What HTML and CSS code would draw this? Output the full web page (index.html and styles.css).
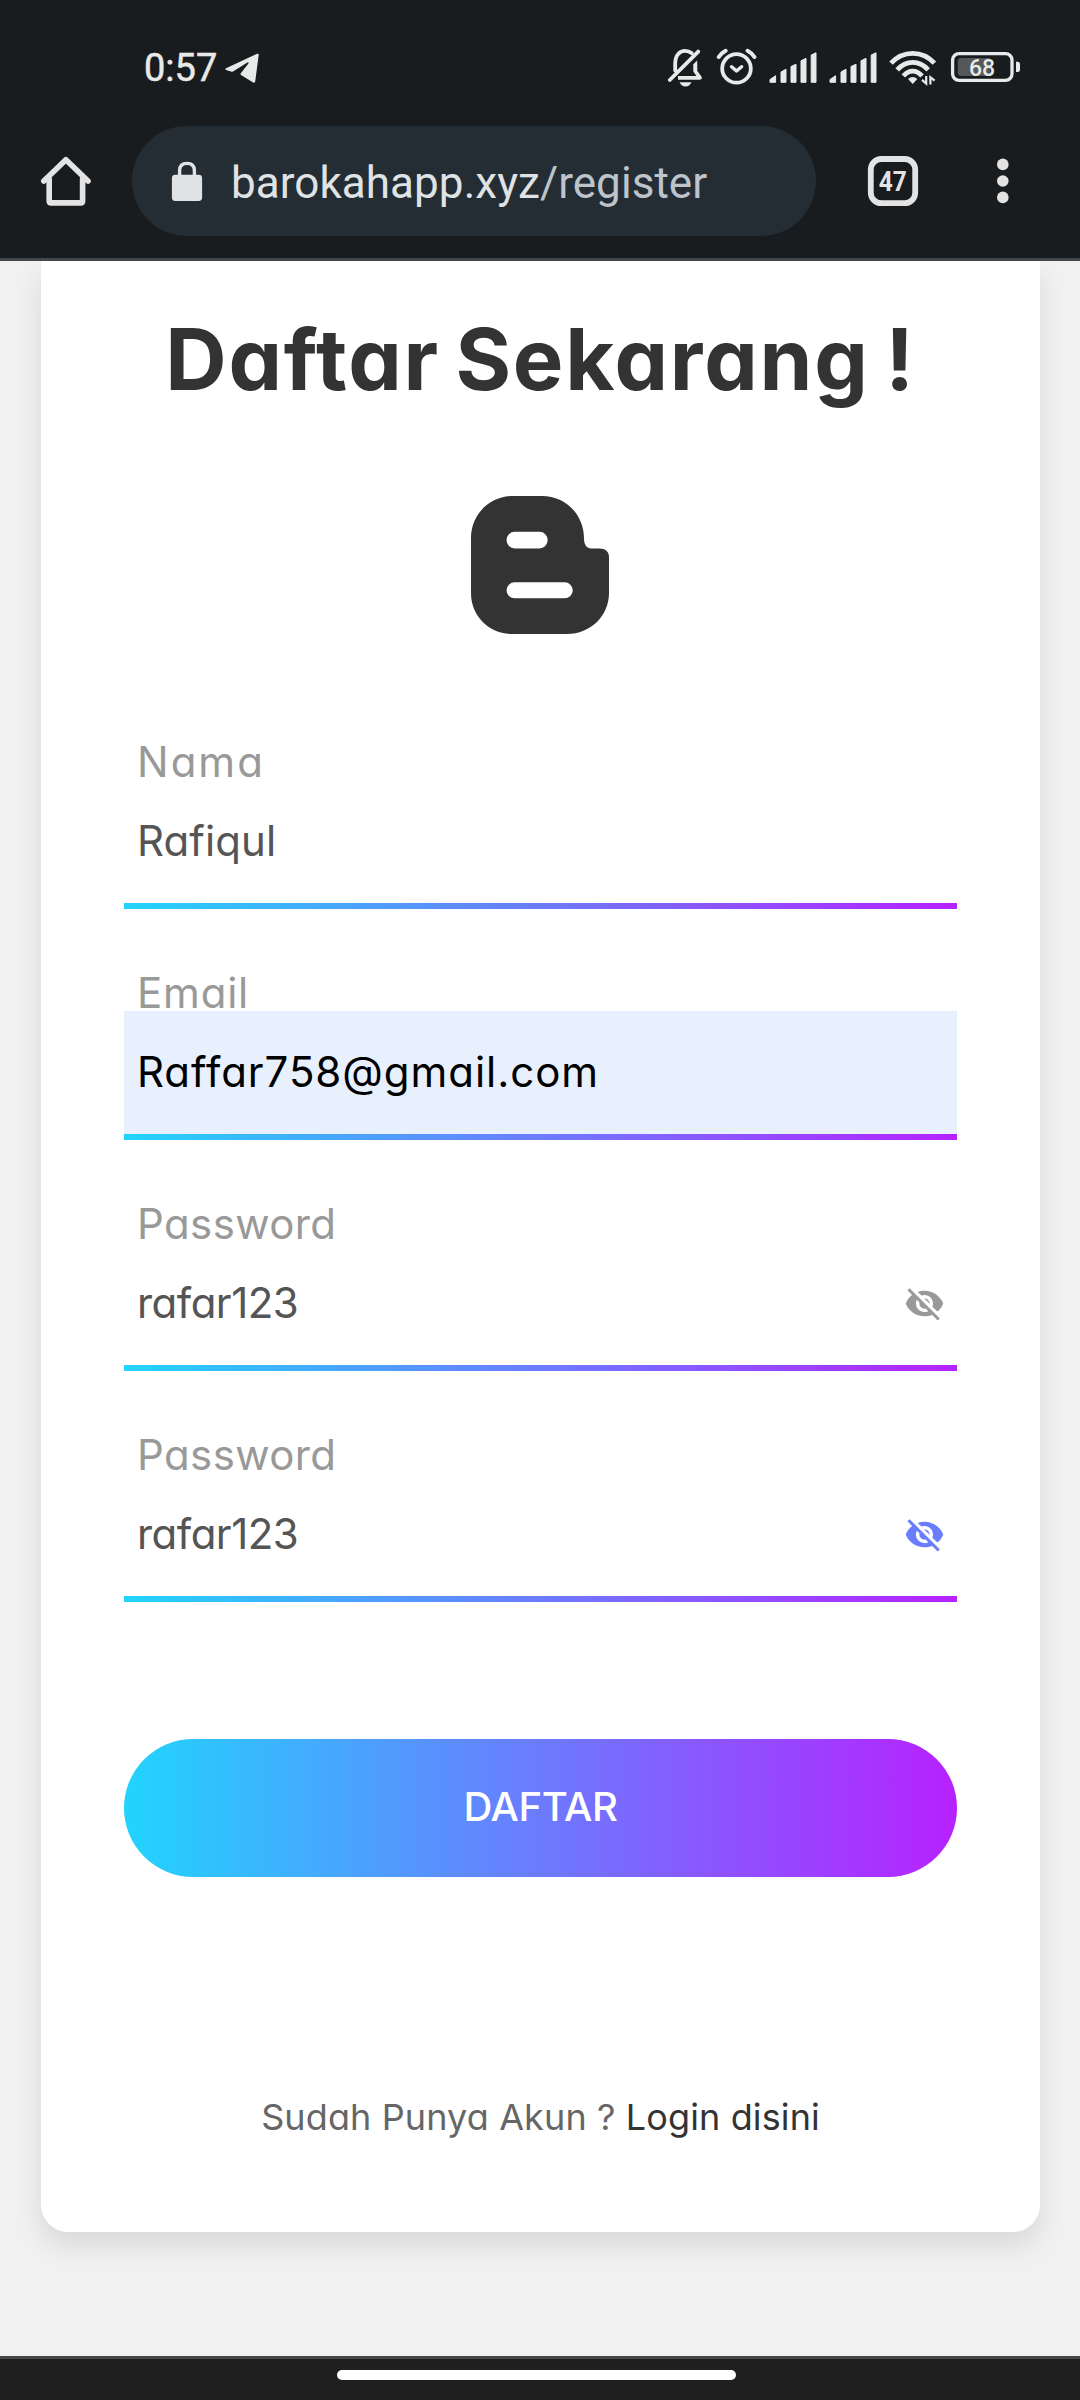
FILE: index.html
```html
<!DOCTYPE html>
<html lang="id">
<head>
<meta charset="utf-8">
<title>Daftar Sekarang</title>
<link rel="stylesheet" href="styles.css">
</head>
<body>
<div class="screen">
  <header class="chrome">
    <div class="status">
      <span class="clock">0:57</span>
      <svg class="telegram" viewBox="225 48 34 40" width="34" height="40"><path d="M257 53.8Q258.8 53.2 258.7 55L255.2 81.5Q254.8 83.2 253.2 82.4L241 75Q240 74.3 240.8 73.2L248.6 63.2Q248.8 61.8 247.4 62.5L233 71.6Q232 72 231 71.6L226 70Q224.7 69.2 226 68.2Z" fill="#e8eae9"/></svg>
      <div class="status-icons">
        <svg viewBox="668 48 36 40" width="36" height="40" fill="none" stroke="#e8eae9" stroke-width="3.8" stroke-linecap="round" stroke-linejoin="round">
          <path d="M675.2 70.5V63.5C675.2 55 680 50.9 685 50.9C687.8 50.9 689.8 51.6 691.5 53M669.8 80L698.2 51.6"/>
          <path d="M695.2 64V71L700 77.8H678" stroke-linecap="butt"/>
          <path d="M694 63.5L697.2 60.5V70L694 71Z" fill="#e8eae9" stroke="none"/>
          <path d="M679.5 82.3H691.5Q689.5 86.5 685.5 86.5T679.5 82.3Z" fill="#e8eae9" stroke="none"/>
        </svg>
        <svg viewBox="716 48 41 40" width="41" height="40" fill="none" stroke="#e8eae9" stroke-width="3.8" stroke-linecap="round" stroke-linejoin="round">
          <circle cx="736.5" cy="68.4" r="14.3"/>
          <path d="M731.6 66.7L736.5 71L741.6 66.7" stroke-width="3.4"/>
          <path d="M718.8 57Q721 53.3 725.6 50.8M754.4 57Q752.2 53.3 747.6 50.8" stroke-width="4"/>
        </svg>
        <svg class="signal" viewBox="769 48 48 40" width="48" height="40" fill="#e8eae9" stroke="#e8eae9" stroke-width="1" stroke-linejoin="round">
          <path id="bars" d="M770 82.3V79.5L775.6 75.7V82.3ZM781 82.3V72L786 69.2V82.3ZM791 82.3V66.5L796 64.2V82.3ZM801 82.3V60.8L806 58.3V82.3ZM811.2 82.3V55L816 52.8V82.3Z"/>
        </svg>
        <svg class="signal" viewBox="769 48 48 40" width="48" height="40" fill="#e8eae9" stroke="#e8eae9" stroke-width="1" stroke-linejoin="round">
          <use href="#bars"/>
        </svg>
        <svg viewBox="889 48 48 40" width="48" height="40" fill="none" stroke="#e8eae9" stroke-width="4.8">
          <path d="M891 63.2Q900 53.3 912.7 53.3T934.4 63.2M897.2 69.8Q904 62.4 912.7 62.4T928.2 69.8M903.4 76Q907.5 71.2 912.7 71.2T922 76"/>
          <path d="M908 79Q912.7 74.8 917.4 79L912.7 84Z" fill="#e8eae9" stroke="none"/>
          <path d="M926.2 76V83.5L922 79.8M930.4 84.5V77.2L934.6 80.6" stroke-width="2.2"/>
        </svg>
        <svg viewBox="949 48 72 40" width="72" height="40">
          <rect x="952.6" y="53.6" width="59.4" height="26.8" rx="6.5" fill="none" stroke="#e8eae9" stroke-width="3.3"/>
          <path d="M961 58H990V76H961Q957.7 76 957.7 72.7V61.3Q957.7 58 961 58Z" fill="#555759"/>
          <path d="M1016 61.7H1017.5Q1020 61.7 1020 64V69.5Q1020 72 1017.5 72H1016Z" fill="#e8eae9"/>
          <text class="battery-level" x="982" y="75.8" text-anchor="middle">68</text>
        </svg>
      </div>
    </div>
    <div class="toolbar">
      <svg class="home" viewBox="40 155 52 52" width="52" height="52" fill="none" stroke="#e3e3e4" stroke-width="5.6" stroke-linecap="round" stroke-linejoin="round"><path d="M49.2 179V201Q49.2 202.9 51.1 202.9H80.7Q82.6 202.9 82.6 201V179"/><path d="M43.800 181L65.900 159.700L88 181"/></svg>
      <div class="omnibox">
        <svg class="lock" viewBox="171 160 32 41" width="32" height="41"><rect x="171.9" y="173.7" width="30.2" height="26.2" rx="3.4" fill="#e0e3e6"/><path d="M179.6 175V169.6Q179.6 162.4 187 162.4T194.4 169.6V175" fill="none" stroke="#e0e3e6" stroke-width="3.4"/></svg>
        <span class="url">barokahapp.xyz<span class="path">/register</span></span>
      </div>
      <svg class="tabs" viewBox="867 155 52 52" width="52" height="52"><rect x="870.8" y="159" width="44.4" height="44.2" rx="10.5" fill="none" stroke="#e3e3e4" stroke-width="5.8"/><text class="tab-count" x="892.8" y="191.2" text-anchor="middle" textLength="28" lengthAdjust="spacingAndGlyphs">47</text></svg>
      <svg class="more" viewBox="996 155 14 52" width="14" height="52" fill="#e3e3e4"><circle cx="1002.8" cy="164.4" r="5.8"/><circle cx="1002.8" cy="181" r="5.8"/><circle cx="1002.8" cy="197.4" r="5.8"/></svg>
    </div>
  </header>

  <main class="page">
    <form class="card">
      <h1 class="title">Daftar Sekarang !</h1>
      <svg class="logo" viewBox="0 0 138 138" width="138" height="138"><path fill="#333" fill-rule="evenodd" d="M42 0H71C95 0 113 19 113 42.500C113 48.500 115.500 52.500 120.500 52.500H128.500C134.500 52.500 138 55.500 138 61V97C138 120 119.500 138 96 138H41C18 138 0 120 0 97V42C0 18.500 18.500 0 42 0ZM43.700 35.800A8.200 8.300 0 0 0 43.700 52.400H68.500A8.200 8.300 0 0 0 68.500 35.800ZM43.700 86.300A8.200 8 0 0 0 43.700 102.300H93.600A8.200 8 0 0 0 93.600 86.300Z"/></svg>

      <div class="fields">
        <div class="field">
          <label class="label name-label">Nama</label>
          <input class="input name" type="text" value="Rafiqul">
        </div>
        <div class="field">
          <label class="label email-label">Email</label>
          <input class="input email" type="text" value="Raffar758@gmail.com">
        </div>
        <div class="field">
          <label class="label">Password</label>
          <div class="reveal">
            <input class="input password" type="text" value="rafar123">
            <svg class="eye" viewBox="0 0 24 24"><path id="eye-off" d="M12 7c2.760 0 5 2.240 5 5 0 .65-.13 1.260-.36 1.830l2.920 2.920c1.510-1.260 2.700-2.890 3.430-4.750-1.730-4.390-6-7.500-11-7.500-1.400 0-2.740.25-3.980.7l2.160 2.160C10.740 7.130 11.350 7 12 7zM2 4.270l2.280 2.280.46.46C3.080 8.300 1.780 10.020 1 12c1.730 4.390 6 7.500 11 7.500 1.550 0 3.030-.3 4.380-.84l.42.42L19.730 22 21 20.730 3.270 3 2 4.270zM7.530 9.800l1.550 1.550c-.05.21-.08.43-.08.65 0 1.660 1.340 3 3 3 .22 0 .44-.03.65-.08l1.550 1.550c-.67.33-1.410.53-2.200.53-2.760 0-5-2.240-5-5 0-.79.2-1.530.53-2.200zm4.310-.78l3.150 3.150.02-.16c0-1.660-1.340-3-3-3l-.17.01z"/></svg>
          </div>
        </div>
        <div class="field">
          <label class="label">Password</label>
          <div class="reveal">
            <input class="input password" type="text" value="rafar123">
            <svg class="eye active" viewBox="0 0 24 24"><use href="#eye-off"/></svg>
          </div>
        </div>
      </div>

      <button class="submit" type="button">DAFTAR</button>
      <p class="login">Sudah Punya Akun ? <a class="login-link">Login disini</a></p>
    </form>
  </main>

  <footer class="navbar"><div class="handle"></div></footer>
</div>
</body>
</html>
```
FILE: styles.css
```css
* { box-sizing: border-box; }
body { margin: 0; }
svg { display: block; flex: none; }

.screen {
  width: 1080px;
  height: 2400px;
  display: flex;
  flex-direction: column;
  overflow: hidden;
}

/* Browser chrome */
.chrome {
  height: 261px;
  flex: none;
  background: #191c1e;
  border-bottom: 3px solid #41474c;
  font-family: Roboto, sans-serif;
}
.status {
  height: 126px;
  padding: 10px 59px 0 144px;
  display: flex;
  align-items: center;
}
.clock {
  width: 81px;
  font-size: 38px;
  font-weight: 400;
  -webkit-text-stroke: .5px #e8eae9;
  line-height: 40px;
  color: #e8eae9;
}
.status-icons {
  margin-left: auto;
  display: flex;
  gap: 12px;
}
.battery-level {
  font: 500 23px Roboto, sans-serif;
  fill: #e8eae9;
}
.toolbar {
  height: 110px;
  padding: 0 70px 0 40px;
  display: flex;
  align-items: center;
}
.omnibox {
  width: 684px;
  height: 110px;
  margin-left: 40px;
  padding-left: 39px;
  display: flex;
  align-items: center;
  border-radius: 55px;
  background: #232d33;
}
.url {
  margin-left: 28px;
  padding-top: 4px;
  font-size: 44px;
  line-height: 52px;
  letter-spacing: .06px;
  color: #e0e3e6;
}
.path { color: #bdc4cc; }
.tabs { margin-left: 51px; }
.tab-count {
  font: 700 28.5px Roboto, sans-serif;
  fill: #e3e3e4;
}
.more { margin-left: auto; }

/* Registration page */
.page {
  height: 2095px;
  flex: none;
  padding: 0 40px 0 41px;
  overflow: hidden;
  background: #f1f1f1;
  font-family: Inter, sans-serif;
  font-feature-settings: "cv11";
}
.card {
  height: 1971px;
  padding: 54px 83px 0;
  display: flex;
  flex-direction: column;
  background: #fff;
  border-radius: 0 0 27px 27px;
  box-shadow: 0 14px 27px rgba(0, 0, 0, .1);
}
.title {
  margin: 0;
  text-align: center;
  font-size: 85px;
  font-weight: 700;
  line-height: 90px;
  letter-spacing: 1.800px;
  word-spacing: -6.500px;
  white-space: nowrap;
  color: #333;
}
.logo { margin: 91px 348px 107px 347px; }
.fields {
  display: flex;
  flex-direction: column;
  gap: 63px;
}
.field {
  height: 168px;
  display: flex;
  flex-direction: column;
  background: linear-gradient(to right, #21d4fd, #b721ff) bottom / 100% 6px no-repeat;
}
.label {
  height: 39px;
  padding-left: 13px;
  font-size: 42px;
  line-height: 41px;
  letter-spacing: .4px;
  color: #999;
}
.name-label { letter-spacing: 2px; }
.email-label { letter-spacing: .8px; }
.input {
  width: 100%;
  height: 123px;
  padding: 0 13px 3px;
  border: 0;
  outline: 0;
  background: transparent;
  font-family: inherit;
  font-feature-settings: inherit;
  font-size: 42px;
  color: #555;
}
.name { letter-spacing: .1px; }
.email {
  letter-spacing: .95px;
  background: #e8f0fe;
  color: #000;
}
.password { letter-spacing: -.5px; }
.reveal {
  display: flex;
  align-items: center;
  padding-right: 12px;
}
.eye {
  width: 41px;
  height: 41px;
  margin-bottom: 1px;
  fill: #999;
}
.eye.active { fill: #6a7dfe; }
.submit {
  height: 138px;
  flex: none;
  margin-top: 137px;
  padding: 0 0 3px;
  border: 0;
  border-radius: 69px;
  background: linear-gradient(to right, #21d4fd, #b721ff);
  font-family: inherit;
  font-size: 40px;
  font-weight: 500;
  letter-spacing: -.4px;
  color: #fff;
}
.login {
  margin: 215px 0 0;
  text-align: center;
  font-size: 36px;
  line-height: 50px;
  letter-spacing: .12px;
  white-space: nowrap;
  color: #666;
}
.login-link { color: #333; }

/* System navigation */
.navbar {
  height: 44px;
  flex: none;
  padding: 11px 0 0 337px;
  background: #1f1f1f;
  border-top: 3px solid #444747;
}
.handle {
  width: 399px;
  height: 10px;
  border-radius: 5px;
  background: #fff;
}
```
